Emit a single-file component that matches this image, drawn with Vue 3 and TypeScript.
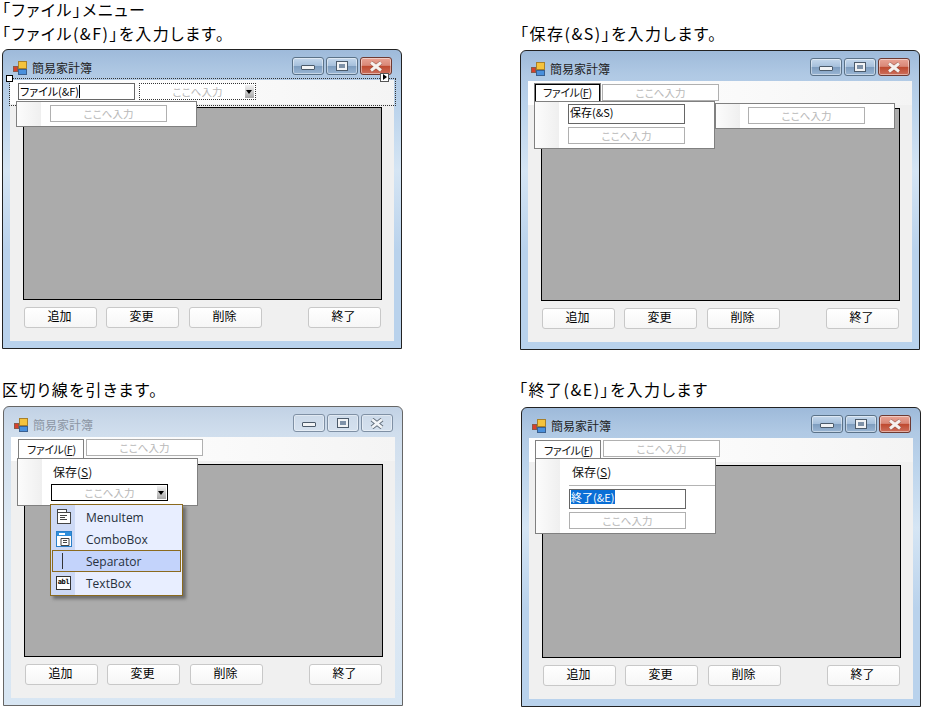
<script setup lang="ts">
// --- DATA ---
const placeholder = 'ここへ入力';
const title = '簡易家計簿';
const footerButtons = ['追加', '変更', '削除'];

const shots = [
  { id: 'file', heading: '「ファイル(&F)」を入力します。' },
  { id: 'save', heading: '「保存(&S)」を入力します。' },
  { id: 'sep', heading: '区切り線を引きます。' },
  { id: 'exit', heading: '「終了(&E)」を入力します' },
];

const addItems = [
  { icon: 'menu', label: 'MenuItem' },
  { icon: 'combo', label: 'ComboBox' },
  { icon: 'line', label: 'Separator' },
  { icon: 'text', label: 'TextBox' },
];
</script>

<template>
  <div class="page">
    <section v-for="shot in shots" :key="shot.id" class="shot" :class="'shot-' + shot.id">
      <h2 v-if="shot.id === 'file'" class="heading first">「ファイル」メニュー</h2>
      <h2 class="heading">{{ shot.heading }}</h2>

      <div class="window" :class="{ inactive: shot.id === 'sep' }">
        <div class="titlebar">
          <svg class="app-icon" width="14" height="14" viewBox="0 0 14 14">
            <rect x="0.5" y="5.5" width="4" height="5" fill="#d8402c" stroke="#8a5a4a" />
            <rect x="5.5" y="0.5" width="8" height="7" fill="#f5c33c" stroke="#a8802a" />
            <rect x="5.5" y="8.5" width="8" height="5" fill="#4a90dc" stroke="#3a6090" />
          </svg>
          <span class="title-text">{{ title }}</span>
          <div class="caption">
            <div class="cap-btn"><span class="glyph-min"></span></div>
            <div class="cap-btn"><span class="glyph-max"></span></div>
            <div class="cap-btn close">
              <svg width="16" height="11" viewBox="0 0 16 11">
                <path d="M3 1.5 L13 9.5 M13 1.5 L3 9.5" class="glyph-x-back" />
                <path d="M3 1.5 L13 9.5 M13 1.5 L3 9.5" class="glyph-x" />
              </svg>
            </div>
          </div>
        </div>

        <div class="client">
          <div class="menustrip" :class="'strip-' + shot.id">
            <template v-if="shot.id === 'file'">
              <div class="field typed">ファイル(&amp;F)<span class="caret"></span></div>
              <div class="field dotted">
                <span class="hint">{{ placeholder }}</span>
                <span class="arrow"></span>
              </div>
            </template>
            <template v-else>
              <div class="top-item" :class="{ selected: shot.id === 'save' }">ファイル(<u>F</u>)</div>
              <div class="field"><span class="hint">{{ placeholder }}</span></div>
            </template>
          </div>

          <div class="panel"></div>

          <div class="footer">
            <button v-for="label in footerButtons" :key="label" class="form-btn">{{ label }}</button>
            <button class="form-btn last">終了</button>
          </div>
        </div>

        <!-- designer overlays -->
        <template v-if="shot.id === 'file'">
          <div class="selection"></div>
          <span class="handle"></span>
          <span class="smart-tag"></span>
          <div class="drop drop-file">
            <div class="field"><span class="hint">{{ placeholder }}</span></div>
          </div>
        </template>

        <template v-if="shot.id === 'save'">
          <div class="drop drop-side">
            <div class="field"><span class="hint">{{ placeholder }}</span></div>
          </div>
          <div class="drop drop-save">
            <div class="field typed tall">保存(&amp;S)</div>
            <div class="field"><span class="hint">{{ placeholder }}</span></div>
          </div>
        </template>

        <template v-if="shot.id === 'sep'">
          <div class="drop drop-sep">
            <div class="item">保存(<u>S</u>)</div>
            <div class="field black">
              <span class="hint">{{ placeholder }}</span>
              <span class="arrow"></span>
            </div>
          </div>
          <div class="add-menu">
            <div
              v-for="entry in addItems"
              :key="entry.icon"
              class="add-row"
              :class="{ hot: entry.icon === 'line' }"
            >
              <span class="add-icon">
                <svg v-if="entry.icon === 'menu'" width="16" height="16" viewBox="0 0 16 16">
                  <rect x="1.5" y="0.5" width="9" height="3" fill="#fff" stroke="#444" />
                  <rect x="1.5" y="3.5" width="13" height="11" fill="#fff" stroke="#444" />
                  <path d="M4 6.5h7M4 8.5h5M4 10.5h7" stroke="#444" fill="none" />
                </svg>
                <svg v-else-if="entry.icon === 'combo'" width="16" height="16" viewBox="0 0 16 16">
                  <rect x="0.5" y="0.5" width="15" height="15" fill="#fff" stroke="#2a7fc8" />
                  <rect x="1" y="1" width="14" height="4" fill="#2f8fdc" />
                  <rect x="3" y="2" width="6" height="2" fill="#fff" />
                  <path d="M5 7.5h8v7H5z" fill="#fff" stroke="#444" />
                  <path d="M7 9.5h4M7 11.5h4" stroke="#444" fill="none" />
                </svg>
                <svg v-else-if="entry.icon === 'line'" width="16" height="16" viewBox="0 0 16 16">
                  <path d="M6.5 0v16" stroke="#333" fill="none" />
                </svg>
                <span v-else class="abl">abl</span>
              </span>
              <span class="add-label">{{ entry.label }}</span>
            </div>
          </div>
        </template>

        <template v-if="shot.id === 'exit'">
          <div class="drop drop-exit">
            <div class="item wide">保存(<u>S</u>)</div>
            <div class="rule"></div>
            <div class="field typed tall"><span class="picked">終了(&amp;E)</span></div>
            <div class="field"><span class="hint">{{ placeholder }}</span></div>
          </div>
        </template>
      </div>
    </section>
  </div>
</template>

<style scoped>
.page {
  display: grid;
  grid-template-columns: 518px 407px;
  grid-template-rows: 350px 360px;
  width: 925px;
  height: 710px;
  overflow: hidden;
  font-family: "Noto Sans CJK JP", "Liberation Sans", sans-serif;
  font-feature-settings: "palt";
  color: #000;
}

.shot {
  display: flex;
  flex-direction: column;
  align-items: flex-start;
}
.shot-file { padding-left: 2px; }
.shot-save { padding: 21px 0 0 2px; }
.shot-sep { padding: 27px 0 0 3px; }
.shot-exit { padding: 27px 0 0 3px; }

.heading {
  margin: 0 0 4px 0;
  font-size: 16px;
  font-weight: 400;
  line-height: 24px;
  letter-spacing: 1.5px;
  white-space: nowrap;
}
.heading.first {
  margin-bottom: 3px;
  line-height: 18px;
}
.shot-save .heading { margin-bottom: 5px; }
.shot-sep .heading { margin: 0 0 5px -1px; }
.shot-exit .heading { margin: 0 0 6px -2px; }

/* Aero style window */
.window {
  position: relative;
  box-sizing: border-box;
  flex: none;
  width: 400px;
  height: 300px;
  display: flex;
  flex-direction: column;
  padding: 0 7px 7px;
  border: 1px solid #222;
  border-radius: 6px 6px 0 0;
  background: linear-gradient(#9ebada 0, #b0c9e4 24px, #bcd4ec 60px, #d5e5f4 120px, #b9d2ec 200px, #b9d2ec 100%);
}
.window.inactive {
  border-color: #666;
  background: linear-gradient(#c2d2e5 0, #d0deed 26px, #dde9f4 120px, #d8e6f3 100%);
}

.titlebar {
  flex: none;
  height: 30px;
  display: flex;
  align-items: center;
  gap: 5px;
  padding: 5px 2px 0 3px;
  box-sizing: border-box;
}
.app-icon { flex: none; }
.title-text {
  font-size: 12px;
  color: #222;
  font-feature-settings: normal;
}
.inactive .title-text { color: #8c96a4; }

.caption {
  margin-left: auto;
  display: flex;
  gap: 2px;
  margin-top: -3px;
}
.cap-btn {
  box-sizing: border-box;
  width: 32px;
  height: 18px;
  display: flex;
  align-items: center;
  justify-content: center;
  border: 1px solid #5b7288;
  border-radius: 3px;
  background: linear-gradient(#c5d8ec 0, #a6c0dc 48%, #7e9dbf 52%, #9ab6d4 100%);
  box-shadow: inset 0 0 0 1px rgba(255, 255, 255, 0.45);
}
.cap-btn.close {
  border-color: #6e3a32;
  background: linear-gradient(#e9a394 0, #d98878 46%, #bf4a30 52%, #cd6f5c 100%);
}
.inactive .cap-btn {
  border-color: #7f90a4;
  background: rgba(255, 255, 255, 0.12);
  box-shadow: inset 0 0 0 1px rgba(255, 255, 255, 0.4);
}
.glyph-min {
  width: 14px;
  height: 5px;
  box-sizing: border-box;
  margin-top: 3px;
  border: 1px solid #4b5a6a;
  border-radius: 1px;
  background: #f1f3f5;
}
.glyph-max {
  width: 12px;
  height: 10px;
  box-sizing: border-box;
  border: 2px solid #f1f3f5;
  outline: 1px solid #4b5a6a;
  outline-offset: -1px;
  background: #7f92a8;
  box-shadow: inset 0 0 0 1px #f1f3f5;
}
.glyph-x {
  fill: none;
  stroke: #f6f1ee;
  stroke-width: 3;
}
.glyph-x-back {
  fill: none;
  stroke: #8c4a3c;
  stroke-width: 4;
}
.inactive .glyph-x {
  stroke: #f2f5f8;
  stroke-width: 2.8;
}
.inactive .glyph-x-back {
  stroke: #5f6c7a;
  stroke-width: 4.4;
}

.client {
  flex: 1;
  min-height: 0;
  display: flex;
  flex-direction: column;
  background: #f0f0f0;
}

.menustrip {
  flex: none;
  height: 24px;
  display: flex;
  align-items: flex-start;
  box-sizing: border-box;
  background: linear-gradient(90deg, #fff 0, #fafafa 55%, #f4f4f4 100%);
  font-size: 11px;
}
.strip-file { padding: 3px 0 0 8px; gap: 4px; }
.strip-save { padding: 3px 0 0 7px; gap: 2px; }
.strip-sep { padding: 2px 0 0 7px; gap: 2px; }
.strip-exit { padding: 2px 0 0 6px; gap: 2px; }

.field {
  flex: none;
  box-sizing: border-box;
  position: relative;
  width: 117px;
  height: 17px;
  display: flex;
  align-items: center;
  justify-content: center;
  border: 1px solid #b0b0b0;
  background: #fff;
  font-size: 11px;
  line-height: 15px;
  white-space: nowrap;
}
.hint {
  color: #b8b8b8;
  font-size: 10.5px;
  margin-top: -1px;
}
.field.dotted {
  border: 1px dotted #333;
}
.field.black {
  border-color: #000;
}
.field.typed {
  justify-content: flex-start;
  border-color: #666;
  padding-left: 1px;
  color: #000;
}
.field.tall {
  height: 20px;
  align-items: flex-start;
}
.caret {
  width: 1px;
  height: 13px;
  background: #000;
}
.arrow {
  position: absolute;
  right: 1px;
  top: 1px;
  width: 9px;
  height: 13px;
  background: linear-gradient(#f2f2f2, #a8a8a8);
}
.arrow::after {
  content: "";
  position: absolute;
  left: 1px;
  top: 5px;
  border: 3.5px solid transparent;
  border-top: 4px solid #000;
  border-bottom: 0;
}

.top-item {
  box-sizing: border-box;
  flex: none;
  width: 66px;
  height: 20px;
  padding-left: 8px;
  border: 1px solid #808080;
  border-bottom: 0;
  background: #fff;
  line-height: 18px;
  letter-spacing: -0.4px;
  white-space: nowrap;
  color: #111;
}
.top-item.selected {
  height: 18px;
  width: 65px;
  padding-left: 7px;
  border: 1px solid #000;
  outline: 1px solid #808080;
  line-height: 15px;
}

.panel {
  flex: none;
  height: 193px;
  margin: 3px 12px 0 13px;
  box-sizing: border-box;
  border: 1px solid #000;
  background: #ababab;
}

.footer {
  display: flex;
  gap: 10px;
  margin: 7px 11px 0 14px;
}
.form-btn {
  flex: none;
  box-sizing: border-box;
  width: 73px;
  height: 21px;
  padding: 0 2px 4px 0;
  border: 1px solid #c8c8c8;
  border-radius: 3px;
  background: linear-gradient(#fff, #f6f6f6);
  font-family: inherit;
  font-size: 12px;
  line-height: 15px;
  color: #000;
}
.form-btn:nth-child(2) { margin-left: -1px; }
.form-btn.last { margin-left: 36px; }

/* designer overlays */
.selection {
  position: absolute;
  left: 6px;
  top: 28px;
  width: 387px;
  height: 28px;
  box-sizing: border-box;
  border: 1px dotted #333;
}
.handle {
  position: absolute;
  left: 3px;
  top: 25px;
  width: 5px;
  height: 5px;
  border: 1px solid #000;
  background: #fff;
}
.smart-tag {
  position: absolute;
  left: 377px;
  top: 23px;
  width: 7px;
  height: 7px;
  border: 1px solid #555;
  background: #fff;
}
.smart-tag::after {
  content: "";
  position: absolute;
  left: 2px;
  top: 0;
  border: 3.5px solid transparent;
  border-left: 4px solid #000;
  border-right: 0;
}

.drop {
  position: absolute;
  box-sizing: border-box;
  border: 1px solid #808080;
  background: linear-gradient(90deg, #fcfcfc 0, #efefef 24px, #fff 24px);
  display: flex;
  flex-direction: column;
  align-items: flex-start;
}
.drop-file { left: 13px; top: 51px; width: 181px; height: 26px; padding: 3px 0 0 33px; }
.drop-side { left: 194px; top: 52px; width: 180px; height: 26px; padding: 3px 0 0 32px; }
.drop-save { left: 13px; top: 50px; width: 181px; height: 48px; padding: 2px 0 0 33px; gap: 3px; }
.drop-sep { left: 13px; top: 51px; width: 181px; height: 48px; padding: 0 0 0 33px; }
.drop-exit { left: 13px; top: 50px; width: 181px; height: 76px; padding: 0 0 0 33px; }

.item {
  height: 25px;
  margin-left: 2px;
  font-size: 12px;
  line-height: 25px;
  white-space: nowrap;
  color: #111;
}
.item.wide {
  margin-left: 3px;
}
.rule {
  width: 146px;
  height: 1px;
  margin-bottom: 3px;
  background: #b4b4b4;
}
.drop-exit .item { height: 26px; }
.drop-exit .field.tall { margin-bottom: 3px; }
.picked {
  background: #0a6fd6;
  color: #fff;
  line-height: 14px;
  padding-right: 1px;
}

.add-menu {
  position: absolute;
  left: 46px;
  top: 97px;
  width: 133px;
  height: 92px;
  padding-top: 1px;
  box-sizing: border-box;
  border: 1px solid #8b6a1e;
  background: linear-gradient(90deg, #cdd9f5 0, #cdd9f5 24px, #e8eeff 24px);
  box-shadow: 3px 3px 3px rgba(60, 60, 60, 0.55);
  display: flex;
  flex-direction: column;
}
.add-row {
  flex: none;
  box-sizing: border-box;
  height: 22px;
  display: flex;
  align-items: center;
  margin-left: 1px;
  margin-right: 1px;
  border: 1px solid transparent;
}
.add-row.hot {
  border-color: #8b6a1e;
  background: #c3d3fb;
}
.add-icon {
  flex: none;
  width: 16px;
  height: 16px;
  margin: 0 14px 0 3px;
  display: flex;
}
.add-label {
  font-family: "Open Sans", "Noto Sans", sans-serif;
  font-size: 12px;
  color: #26303c;
}
.abl {
  box-sizing: border-box;
  width: 15px;
  height: 14px;
  margin-top: 1px;
  border: 1px solid #333;
  background: #fff;
  font-family: "DejaVu Sans Mono", monospace;
  font-size: 7px;
  font-weight: 700;
  line-height: 11px;
  text-align: center;
  letter-spacing: -0.3px;
}
</style>

<style>
html,
body {
  margin: 0;
  background: #fff;
}
</style>
